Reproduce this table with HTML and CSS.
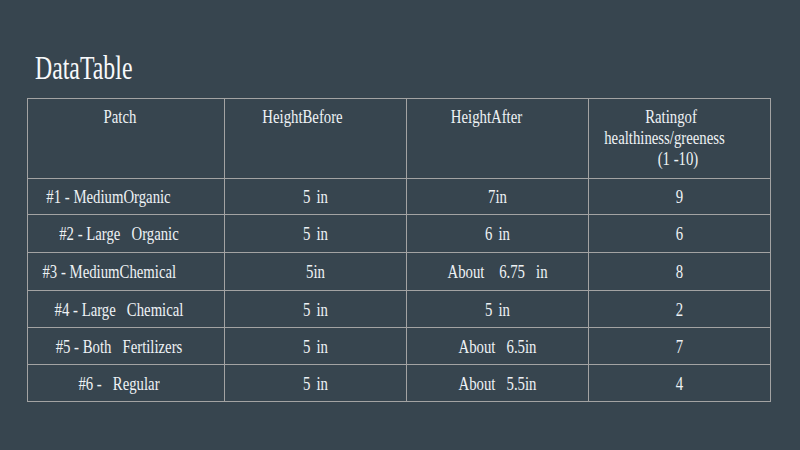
FILE: index.html
```html
<!DOCTYPE html>
<html>
<head>
<meta charset="utf-8">
<title>DataTable</title>
<link rel="stylesheet" href="styles.css">
</head>
<body>
<main class="page">
  <h1 class="title"><span class="title-text">DataTable</span></h1>
  <table class="grid">
    <colgroup>
      <col class="col-a"><col class="col-b"><col class="col-b"><col class="col-b">
    </colgroup>
    <thead>
      <tr class="head-row">
        <th class="hc hc1"><span class="t">Patch</span></th>
        <th class="hc hc2"><span class="t">HeightBefore</span></th>
        <th class="hc hc3"><span class="t">HeightAfter</span></th>
        <th class="hc hc4"><span class="t r1">Ratingof</span><span class="t r2">healthiness/greeness</span><span class="t r3">(1 -10)</span></th>
      </tr>
    </thead>
    <tbody>
      <tr>
        <td class="c1 wide"><span class="t">#1 - MediumOrganic</span></td>
        <td><span class="t sp">5 in</span></td>
        <td><span class="t">7in</span></td>
        <td><span class="t">9</span></td>
      </tr>
      <tr>
        <td class="c1"><span class="t">#2 - Large   Organic</span></td>
        <td><span class="t sp">5 in</span></td>
        <td><span class="t sp">6 in</span></td>
        <td><span class="t">6</span></td>
      </tr>
      <tr>
        <td class="c1 wide"><span class="t">#3 - MediumChemical</span></td>
        <td><span class="t">5in</span></td>
        <td><span class="t">About    6.75   in</span></td>
        <td><span class="t">8</span></td>
      </tr>
      <tr>
        <td class="c1"><span class="t">#4 - Large   Chemical</span></td>
        <td><span class="t sp">5 in</span></td>
        <td><span class="t sp">5 in</span></td>
        <td><span class="t">2</span></td>
      </tr>
      <tr>
        <td class="c1"><span class="t">#5 - Both   Fertilizers</span></td>
        <td><span class="t sp">5 in</span></td>
        <td><span class="t">About   6.5in</span></td>
        <td><span class="t">7</span></td>
      </tr>
      <tr>
        <td class="c1"><span class="t">#6 -   Regular</span></td>
        <td><span class="t sp">5 in</span></td>
        <td><span class="t">About   5.5in</span></td>
        <td><span class="t">4</span></td>
      </tr>
    </tbody>
  </table>
</main>
</body>
</html>
```
FILE: styles.css
```css
html, body {
  margin: 0;
  padding: 0;
  background: #37454f;
}
body {
  width: 800px;
  height: 450px;
  overflow: hidden;
  font-family: "Liberation Serif", "Times New Roman", serif;
  color: #eef2f5;
}
.page {
  padding: 48px 0 0 27px;
}
.title {
  margin: 0 0 11px 8px;
  font-size: 34px;
  font-weight: normal;
  line-height: 39px;
  height: 39px;
  color: #f7f9fb;
}
.title-text {
  display: inline-block;
  transform: scaleX(0.7);
  transform-origin: left center;
}
.grid {
  border-collapse: separate;
  border-spacing: 0;
  table-layout: fixed;
  width: 744px;
  border-top: 1px solid #a3a3a3;
  border-left: 1px solid #a3a3a3;
  font-size: 18px;
}
.col-a { width: 197px; }
.col-b { width: 182px; }
.grid th,
.grid td {
  box-sizing: border-box;
  border-right: 1px solid #a3a3a3;
  border-bottom: 1px solid #a3a3a3;
  padding: 0;
  text-align: center;
  font-weight: normal;
  line-height: normal;
}
.grid td {
  height: 37px;
  padding-top: 2px;
  vertical-align: middle;
}
.grid tbody tr:nth-child(1) td { height: 36px; }
.grid tbody tr:nth-child(2) td,
.grid tbody tr:nth-child(3) td { height: 38px; }
.grid .head-row .hc {
  height: 80px;
  vertical-align: top;
  padding-top: 8px;
}
.grid .head-row .hc1 { padding-right: 12px; }
.grid .head-row .hc2 { padding-right: 26px; }
.grid .head-row .hc3 { padding-right: 22px; }
.t {
  display: block;
  white-space: pre;
  transform: scaleX(0.82);
}
.sp { word-spacing: 3px; }
.r1 { margin-right: 17px; }
.r2 { margin-right: 30px; }
.r3 { margin-right: 3px; }
.grid td.c1 { padding-right: 14px; }
.grid td.wide { padding-right: 35px; }
```
